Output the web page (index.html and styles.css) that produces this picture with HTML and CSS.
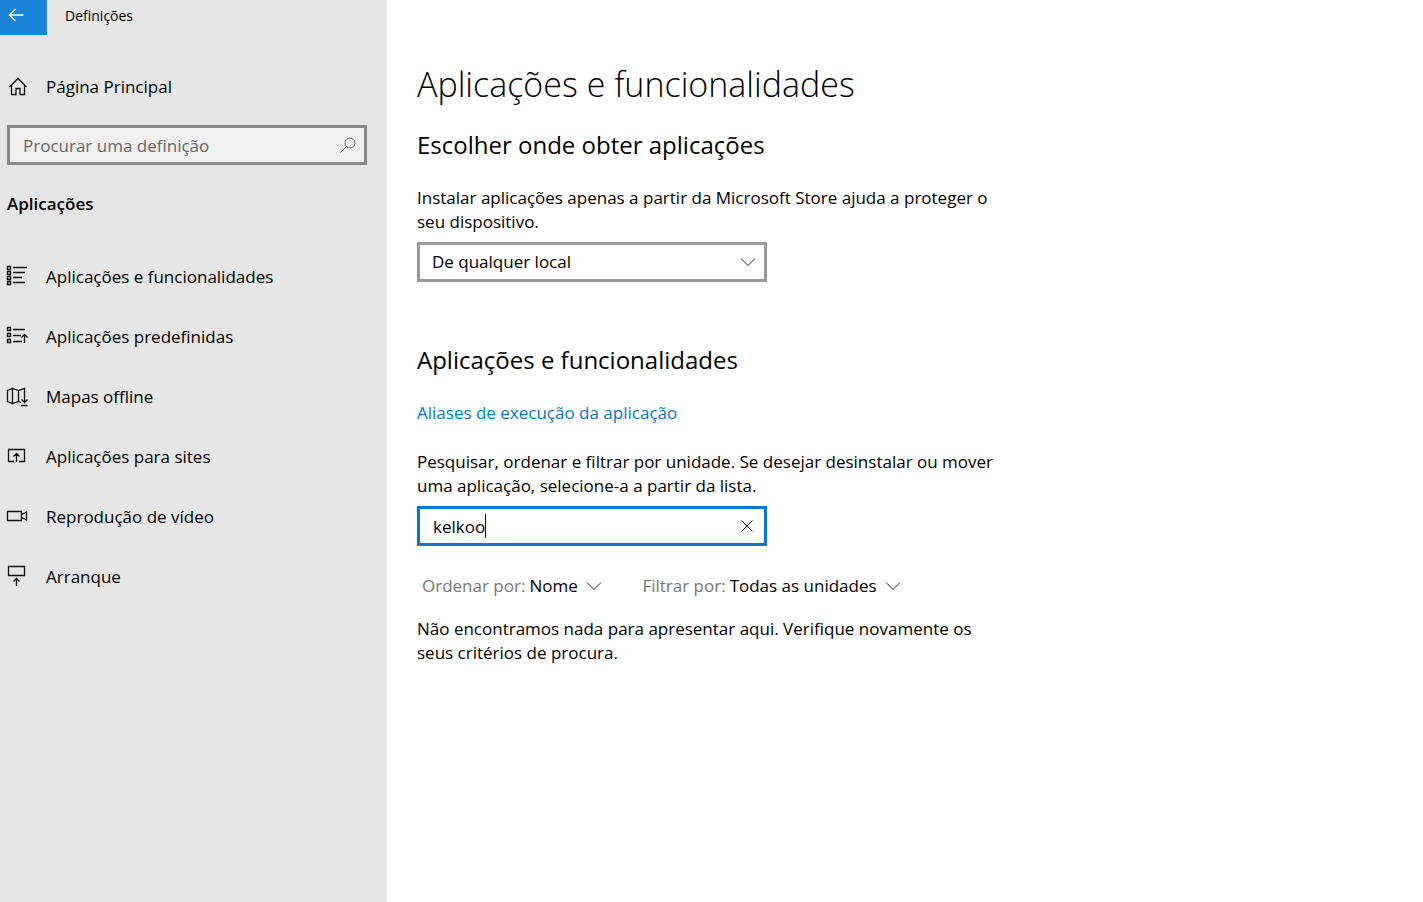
FILE: index.html
```html
<!DOCTYPE html>
<html lang="pt">
<head>
    <meta charset="UTF-8">
    <meta name="viewport" content="width=device-width, initial-scale=1.0">
    <title>Definições</title>
    <link rel="stylesheet" href="styles.css">
</head>
<body>
    <aside class="sidebar">
        <header class="titlebar">
            <button type="button" class="back-btn" aria-label="Voltar">
                <svg width="16" height="14" viewBox="0 0 16 14"><path d="M15.500 7H1.500M7.500 1L1.500 7L7.500 13"/></svg>
            </button>
            <span class="window-title">Definições</span>
        </header>

        <a href="#" class="nav-link home">
            <svg class="icon" width="22" height="22" viewBox="0 0 22 22"><path d="M3.500 11L12 2.500L20.500 11M5.500 9.500V18.500H10V12.500H14V18.500H18.500V9.500"/></svg>
            Página Principal
        </a>

        <form class="search">
            <input type="text" class="text-box" aria-label="Procurar uma definição" placeholder="Procurar uma definição">
            <svg class="box-icon" width="16" height="16" viewBox="0 0 16 16"><circle cx="10" cy="6" r="5"/><path d="M6.500 9.500L.5 15.500"/></svg>
        </form>

        <h2 class="section-name">Aplicações</h2>

        <nav class="menu">
            <a href="#" class="nav-link">
                <svg class="icon" width="22" height="22" viewBox="0 0 22 22"><path class="dots" d="M1.500 .5h3v3h-3zM1.500 5.500h3v3h-3zM1.500 10.500h3v3h-3zM1.500 15.500h3v3h-3z"/><path d="M7 1.500h14M7 6.500h12M7 11.500h9M7 16.500h12"/></svg>
                Aplicações e funcionalidades
            </a>
            <a href="#" class="nav-link">
                <svg class="icon" width="22" height="22" viewBox="0 0 22 22"><path class="dots" d="M1.500 1.500h3v3h-3zM1.500 7.500h3v3h-3zM1.500 13.500h3v3h-3z"/><path d="M7 3.500h12M7 9.500h8M7 15.500h9M18.500 17V8.500M15.500 11.500L18.500 8.500L21.500 11.500"/></svg>
                Aplicações predefinidas
            </a>
            <a href="#" class="nav-link">
                <svg class="icon" width="22" height="22" viewBox="0 0 22 22"><path d="M15 16.500L12.500 15.500L6.500 17.500L1.500 15.500V4.500L6.500 2.500L12.500 4.500L18.500 2.500V16M6.500 2.500V17M12.500 4.500V15.500M15.500 13.500L18.500 16.500L21.500 13.500M15 19.500H21.500"/></svg>
                Mapas offline
            </a>
            <a href="#" class="nav-link">
                <svg class="icon" width="22" height="22" viewBox="0 0 22 22"><path d="M8 15.500H2.500V3.500H18.500V15.500H13M10.500 16V7.500M7.500 10.500L10.500 7.500L13.500 10.500"/></svg>
                Aplicações para sites
            </a>
            <a href="#" class="nav-link">
                <svg class="icon" width="22" height="22" viewBox="0 0 22 22"><path d="M1.500 5.500h14v9h-14zM15.500 8.500L20.500 6V14L15.500 11.500"/></svg>
                Reprodução de vídeo
            </a>
            <a href="#" class="nav-link">
                <svg class="icon" width="22" height="22" viewBox="0 0 22 22"><path d="M2.500 .5h16v9h-16zM10.500 20V12.500M7.500 15.500L10.500 12.500L13.500 15.500"/></svg>
                Arranque
            </a>
        </nav>
    </aside>

    <main class="content">
        <h1>Aplicações e funcionalidades</h1>

        <section class="source">
            <h2>Escolher onde obter aplicações</h2>
            <p><label for="source">Instalar aplicações apenas a partir da Microsoft Store ajuda a proteger o seu dispositivo.</label></p>
            <div class="field">
                <select id="source" class="text-box">
                    <option>De qualquer local</option>
                </select>
                <svg class="box-icon" width="16" height="16" viewBox="0 0 16 16"><path d="M1 4.500L8 11.500L15 4.500"/></svg>
            </div>
        </section>

        <section class="apps">
            <h2>Aplicações e funcionalidades</h2>
            <a href="#" class="alias-link">Aliases de execução da aplicação</a>
            <p><label for="filter">Pesquisar, ordenar e filtrar por unidade. Se desejar desinstalar ou mover uma aplicação, selecione-a a partir da lista.</label></p>
            <div class="field">
                <input type="text" id="filter" class="text-box active" value="kelkoo">
                <span class="caret"></span>
                <button type="button" class="clear-btn" aria-label="Limpar">
                    <svg width="12" height="12" viewBox="0 0 12 12"><path d="M.5 .5L11.500 11.500M11.500 .5L.5 11.500"/></svg>
                </button>
            </div>

            <div class="filters">
                <div class="filter">
                    <label for="sort">Ordenar por:</label>
                    <select id="sort">
                        <option>Nome</option>
                    </select>
                    <svg width="16" height="16" viewBox="0 0 16 16"><path d="M1 4.500L8 11.500L15 4.500"/></svg>
                </div>
                <div class="filter">
                    <label for="drive">Filtrar por:</label>
                    <select id="drive">
                        <option>Todas as unidades</option>
                    </select>
                    <svg width="16" height="16" viewBox="0 0 16 16"><path d="M1 4.500L8 11.500L15 4.500"/></svg>
                </div>
            </div>

            <p class="empty">Não encontramos nada para apresentar aqui. Verifique novamente os seus critérios de procura.</p>
        </section>
    </main>
</body>
</html>
```
FILE: styles.css
```css
* {
    margin: 0;
    padding: 0;
    box-sizing: border-box;
}

body {
    min-height: 100vh;
    display: flex;
    background: #fff;
    color: #000;
    font-family: 'Segoe UI', 'Open Sans', 'Noto Sans', sans-serif;
    font-size: 17px;
    line-height: 24px;
}

a {
    color: inherit;
    text-decoration: none;
}

input,
select,
button {
    font: inherit;
    color: inherit;
    border: none;
    background: none;
    outline: none;
}

select {
    appearance: none;
}

svg {
    fill: none;
    stroke: #222;
    flex-shrink: 0;
}

/* Sidebar */
.sidebar {
    flex: 0 0 387px;
    background: #e6e6e6;
}

.titlebar {
    display: flex;
    height: 35px;
    font-size: 14px;
}

.back-btn {
    width: 47px;
    padding: 0 0 6px 8px;
    background: #1883d7;
    text-align: left;
}

.back-btn svg {
    display: block;
    stroke: #fff;
    stroke-width: 1.4;
}

.window-title {
    margin-left: 18px;
    line-height: 32px;
}

.nav-link {
    display: flex;
    align-items: center;
    gap: 18px;
    height: 60px;
    padding-left: 6px;
}

.icon {
    overflow: visible;
    stroke: #111;
    stroke-width: 1.3;
}

.dots {
    stroke-width: 1.4;
}

.home {
    margin: 22px 0 8px;
}

.search {
    position: relative;
    margin: 0 20px 0 7px;
}

.text-box {
    display: block;
    width: 100%;
    height: 40px;
    padding: 0 40px 0 12px;
    border: 3px solid #999;
}

.search .text-box {
    padding-left: 13px;
    background: #f0f0f0;
    border-color: #8a8a8a;
}

.search .text-box::placeholder {
    color: #666;
}

.box-icon {
    position: absolute;
    top: 12px;
    right: 11px;
    pointer-events: none;
}

.search .box-icon {
    stroke: #666;
}

.section-name {
    margin: 27px 0 31px 7px;
    font-size: 17px;
    font-weight: 600;
}

/* Content */
.content {
    flex: 1;
    padding: 60px 30px;
}

h1 {
    font-size: 34px;
    line-height: 48px;
    font-weight: 300;
}

.content h2 {
    font-size: 24px;
    line-height: 32px;
    font-weight: 400;
}

.content p {
    max-width: 585px;
}

.source {
    margin-top: 21px;
}

.source p,
.apps p {
    margin-top: 25px;
}

.field {
    position: relative;
    max-width: 350px;
    margin-top: 8px;
}

.apps {
    margin-top: 62px;
}

.alias-link {
    display: inline-block;
    margin-top: 25px;
    color: #0078d7;
}

.text-box.active {
    padding-left: 13px;
    border-color: #0078d7;
}

.caret {
    position: absolute;
    top: 8px;
    left: 68px;
    width: 1px;
    height: 24px;
    background: #000;
}

.clear-btn {
    position: absolute;
    top: 4px;
    right: 4px;
    width: 32px;
    height: 32px;
    display: flex;
    align-items: center;
    justify-content: center;
}

.filters {
    display: flex;
    gap: 40px;
    margin: 28px 0 0 5px;
}

.filter {
    display: flex;
    align-items: center;
}

.filter label {
    margin-right: 4px;
    color: #767676;
}

.filter svg {
    margin-left: 8px;
}

.apps .empty {
    margin-top: 19px;
}
```
